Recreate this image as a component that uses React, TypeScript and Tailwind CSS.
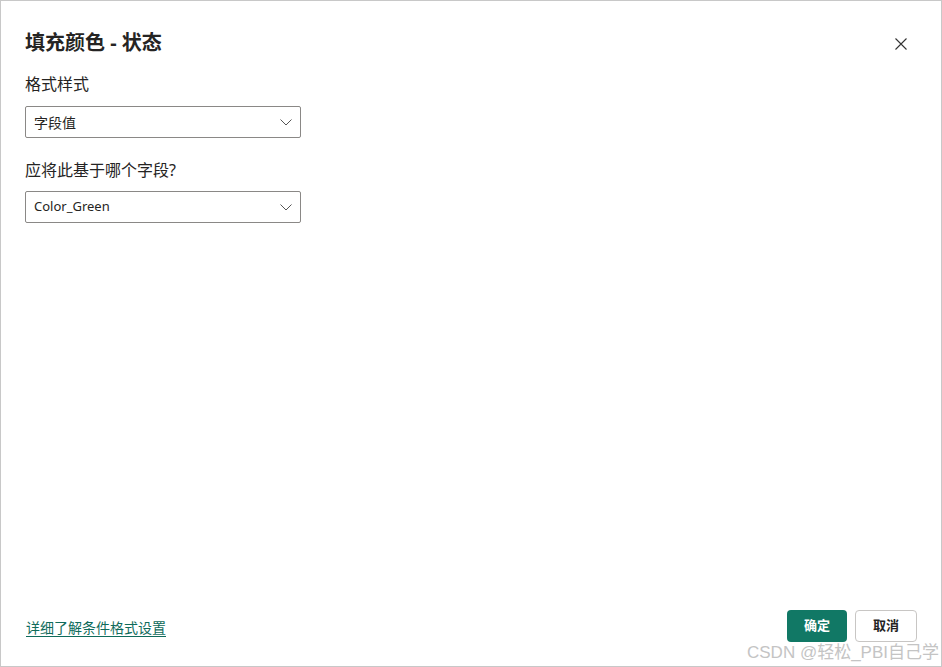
import React from 'react';

const font = { fontFamily: '"Segoe UI", "Noto Sans", "Noto Sans CJK SC", sans-serif' };

const Chevron = () => (
  <svg width="14" height="14" viewBox="0 0 14 14" fill="none">
    <path d="M1.5 4.5 L7 10 L12.5 4.5" stroke="#555" strokeWidth="1" />
  </svg>
);

const Select = ({ value, cjk }: { value: string; cjk?: boolean }) => (
  <div className="w-[276px] h-[32px] border border-[#8a8886] rounded-[2px] flex items-center justify-between pl-[8px] pr-[7px] text-[#252423]">
    <span className={cjk ? 'text-[14px]' : 'text-[13px]'}>{value}</span>
    <Chevron />
  </div>
);

export default function App() {
  return (
    <div style={font} className="w-[942px] h-[667px] bg-white border border-[#c8c8c8] relative flex flex-col">
      <div className="flex items-start justify-between pl-[24px] pr-[34px] pt-[28px]">
        <h1 className="text-[20px] font-bold text-[#252423] leading-[28px]">填充颜色 - 状态</h1>
        <svg width="12" height="12" viewBox="0 0 12 12" className="mt-[9px]">
          <path d="M0.5 0.5 L11.5 11.5 M11.5 0.5 L0.5 11.5" stroke="#333" strokeWidth="1.1" />
        </svg>
      </div>
      <div className="pl-[24px] flex flex-col">
        <div className="text-[16px] text-[#252423] mt-[16px] leading-[22px]">格式样式</div>
        <div className="mt-[11px]"><Select value="字段值" cjk /></div>
        <div className="text-[16px] text-[#252423] mt-[21px] leading-[22px]">应将此基于哪个字段?</div>
        <div className="mt-[10px]"><Select value="Color_Green" /></div>
      </div>
      <div className="flex-1" />
      <div className="flex items-center justify-between pl-[25px] pr-[24px] pb-[24px]">
        <a className="text-[14px] text-[#0f6b5b] underline underline-offset-[3px] mt-[2px]">详细了解条件格式设置</a>
        <div className="flex gap-[8px]">
          <button className="w-[60px] h-[32px] rounded-[4px] bg-[#117865] text-white text-[13px] font-bold">确定</button>
          <button className="w-[62px] h-[32px] rounded-[4px] border border-[#c8c6c4] bg-white text-[#252423] text-[13px] font-bold">取消</button>
        </div>
      </div>
      <div className="absolute right-[2px] bottom-[4px] text-[17px] text-[#c4c4c4] leading-[18px]" style={{ fontFamily: '"Liberation Sans", "Noto Sans CJK SC", sans-serif' }}>CSDN @轻松_PBI自己学</div>
    </div>
  );
}
